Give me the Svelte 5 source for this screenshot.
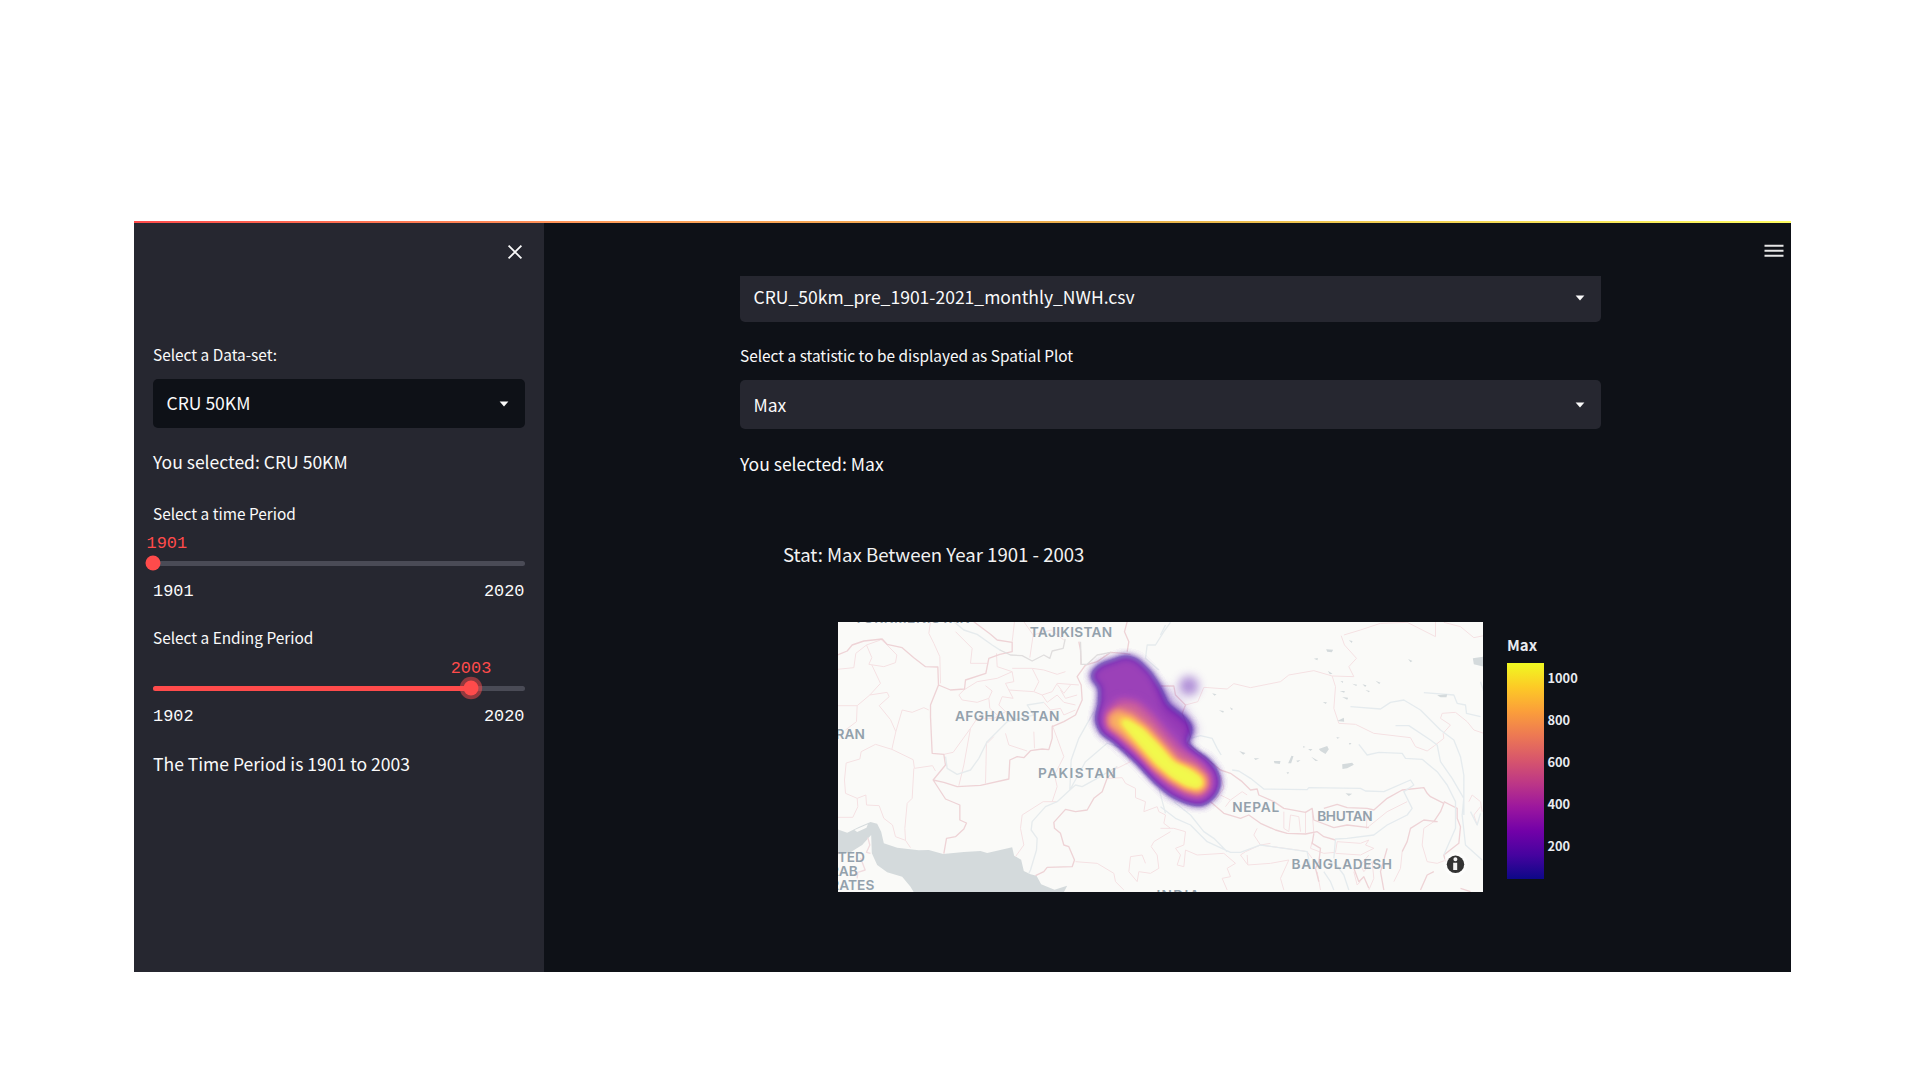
<script>
  const sliders = [
    { label: 'Select a time Period', min: 1901, max: 2020, value: 1901, pos: 0, focus: false },
    { label: 'Select a Ending Period', min: 1902, max: 2020, value: 2003, pos: 85.6, focus: true }
  ];
  const ticks = [1000, 800, 600, 400, 200];
</script>

{#snippet caret()}
  <svg class="caret" viewBox="0 0 10 6"><path d="M0.6 0.6H9.4L5 5.4Z" fill="#fafafa" /></svg>
{/snippet}

<main class="app">
  <div class="rainbow"></div>
  <div class="body">
    <aside>
      <div class="close">
        <svg viewBox="0 0 16 16"><path d="M1.6 1.6L14.4 14.4M14.4 1.6L1.6 14.4" stroke="#fafafa" stroke-width="1.8" /></svg>
      </div>
      <div class="label first">Select a Data-set:</div>
      <div class="select dark"><span>CRU 50KM</span>{@render caret()}</div>
      <p class="text picked">You selected: CRU 50KM</p>
      {#each sliders as s}
        <div class="slider">
          <div class="label">{s.label}</div>
          <div class="track">
            <div class="fill" style:width="{s.pos}%"></div>
            <div class="thumb" class:focus={s.focus} style:left="{s.pos}%"></div>
            <div class="value" class:edge={s.pos === 0} style:left="{s.pos}%">{s.value}</div>
          </div>
          <div class="range"><span>{s.min}</span><span>{s.max}</span></div>
        </div>
      {/each}
      <p class="text">The Time Period is 1901 to 2003</p>
    </aside>

    <section class="content">
      <svg class="menu" viewBox="0 0 20 14"><path d="M0.5 1.7H19.5M0.5 6.7H19.5M0.5 11.7H19.5" stroke="#e6e6e6" stroke-width="2.1" /></svg>
      <div class="column">
        <div class="select cut"><span>CRU_50km_pre_1901-2021_monthly_NWH.csv</span>{@render caret()}</div>
        <div class="label stat">Select a statistic to be displayed as Spatial Plot</div>
        <div class="select"><span>Max</span>{@render caret()}</div>
        <p class="text picked2">You selected: Max</p>
        <h2>Stat: Max Between Year 1901 - 2003</h2>
        <div class="plot">
          <svg class="map" viewBox="837.5 622 645 269.5" preserveAspectRatio="none">
            <defs>
              <filter id="soft" x="-50%" y="-50%" width="200%" height="200%" color-interpolation-filters="sRGB"><feGaussianBlur stdDeviation="12" /></filter>
              <filter id="mid" x="-50%" y="-50%" width="200%" height="200%" color-interpolation-filters="sRGB"><feGaussianBlur stdDeviation="15" /></filter>
              <filter id="fine" x="-50%" y="-50%" width="200%" height="200%" color-interpolation-filters="sRGB"><feGaussianBlur stdDeviation="9" /></filter>
              <!-- maps grey intensity to the plasma colour scale -->
              <filter id="plasma" x="0" y="0" width="100%" height="100%" color-interpolation-filters="sRGB">
                <feColorMatrix values="1 0 0 0 0  1 0 0 0 0  1 0 0 0 0  1 0 0 0 0" />
                <feComponentTransfer>
                  <feFuncR type="table" tableValues=".26 .24 .42 .55 .70 .82 .91 .97 .99 .95 .94" />
                  <feFuncG type="table" tableValues=".02 .02 .03 .09 .17 .30 .43 .57 .74 .92 .98" />
                  <feFuncB type="table" tableValues=".62 .62 .66 .66 .57 .45 .35 .26 .17 .14 .13" />
                  <feFuncA type="table" tableValues="0 .62 .80 .80 .80 .80 .80 .80 .80 .80 .80" />
                </feComponentTransfer>
              </filter>
            </defs>
            <rect x="837" y="621" width="647" height="272" fill="#fafaf8" />
            <!-- western half -->
            <g transform="translate(830 615) scale(.33333)" fill="none" stroke-linejoin="round">
              <path fill="#d4dadc" d="M20 643L50 653L85 636L120 621L140 626L152 650L160 685L200 698L265 706L295 705L338 717L400 711L450 708L470 714L545 697L551 722L572 734L580 768L600 778L618 782L632 808L672 824L710 812L700 832L250 832L240 815L215 785L170 772L140 750L124 715L122 660L95 690L60 712L20 718Z" />
              <path fill="#fafaf8" d="M72 645L112 628L108 638L80 651Z" />
              <path stroke="#f1dcdf" stroke-width="4" d="M112 668L118 690L108 712L120 715M90 728L104 765L82 772L80 790" />
              <g stroke="#f5e1e3" stroke-width="3">
                <path d="M20 163L70 158L76 115L108 90L150 75M108 90L124 128L115 148L160 155L195 143L199 120L170 90L150 72M124 150L150 205L118 240L80 272L20 272M80 272L78 320L45 345M118 240L170 232L176 245L146 272L180 314L196 350L184 403L248 434L252 460L306 452L315 468M196 350L215 285L245 292L280 278L295 285M184 403L135 388L92 410L88 432L47 444L42 495L45 535L80 550L82 575L67 607L20 607M80 550L106 540L108 570L146 572L160 610L186 630L195 665L225 676L223 640L230 565L245 550L250 460M225 676L240 698" />
                <path d="M300 20L295 55L310 85L328 125L330 205M375 50L425 100L420 145L470 145M545 80L552 20M580 20L608 60L662 45L700 75M608 60L598 128M498 115L500 155L545 170L550 200L525 205L535 225L610 230L625 200L605 160L640 165L680 178L705 170M545 160L605 160M545 170L500 190L440 200L400 225L385 240L395 255L440 262L475 250L485 228L465 212M535 225L548 250L515 245L505 270L525 290L490 310L440 310L420 340L400 450L385 512M475 250L478 280L500 300M610 230L635 240L665 230L680 205L745 210M635 240L650 262L680 240L700 262L735 270M340 418L368 412L420 340M468 380L465 505M490 365L470 385M525 355L535 390L590 408M610 350L612 400M665 330L680 370L700 425L672 480L680 515L665 560M640 262L660 285L690 280L700 300L735 285M680 208L700 235L720 210M690 225L705 250L740 240" />
                <path d="M680 560L638 560L575 600L570 640L580 690L555 725M830 490L875 488L885 505L915 520L915 548L945 560L940 590L980 575L985 590L1005 600L1000 625L1020 640M1020 650L970 680L962 695L980 720L985 760L960 775L925 770L920 800L895 770L900 725L935 720L945 745M735 740L800 745L850 775L855 800L880 825M860 460L900 440L885 410" />
              </g>
              <g stroke="#eed3d6" stroke-width="4">
                <path d="M20 120L50 108L65 90L100 78L155 72L170 88L215 98L250 128L285 155L322 156L324 210L300 270L300 305L305 415L340 418L345 450L308 495L340 502L380 515L450 511L535 492L538 435L560 425L580 428L600 407L635 402L655 404L665 370L665 335L700 320L735 300L755 255L752 210L740 185L765 150L800 140L840 112L880 115L900 118M308 495L345 552L388 570L388 615L408 624L400 642L375 665L348 670L340 716M324 210L360 225L402 222L405 195L466 175L475 130L508 118L545 110L545 82L500 75L480 58L440 28L430 20M860 455L830 490L815 530L790 550L770 585L735 590L705 583L670 622L672 640L690 655L700 690L715 695L732 735L725 755L650 757L640 770L615 782M752 150L750 105L745 80M890 20L882 50L895 80L890 110" />
              </g>
              <path stroke="#e0dede" stroke-width="4" d="M508 105L540 120L575 122L605 138L640 120L658 130L665 108L698 100L704 72M752 148L770 148L800 120L840 112M752 148L750 80" />
              <g stroke="#e6ebed" stroke-width="4">
                <path d="M370 20L400 45L440 58L485 90L510 106M345 425L350 460L380 478L420 465L445 430L470 380L500 350L530 320L610 300L590 270L640 262M790 290L745 370L722 435L718 525L680 560L645 575L605 620L602 645L620 670L618 705L600 765M718 525L735 510L755 515L800 490L860 455M718 525L765 440L830 385L880 400M1020 22L1000 50L975 90L950 90L945 130L985 165M600 765L595 775M985 520L1005 595" />
              </g>
            </g>
            <!-- eastern half -->
            <g transform="translate(1160 615) scale(.33333)" fill="none" stroke-linejoin="round">
              <g stroke="#f5e1e3" stroke-width="3">
                <path d="M550 60L600 45L660 25L740 22L825 65L825 20M850 22L900 35L940 68L970 62M542 62L552 90L588 130L565 155L580 185L515 183L460 167L385 180L360 200L270 218L220 206L200 222L130 217L112 260L75 270M515 183L525 215L520 280L535 325L585 328L640 355L750 368L765 395L800 408L822 392L850 370L848 355L870 330L840 310L845 295L885 292L920 320L940 345L970 355" />
                <path d="M180 540L210 555L195 575M210 555L245 530L260 540M160 560L190 520L180 480M370 590L370 640L385 650L390 600L415 605L420 650M435 590L435 655M455 590L460 655M620 590L618 640L680 590L740 560M290 640L280 660L300 690L330 685M260 720L262 750L330 745L385 735L360 790L370 825M262 750L240 720L255 710L300 690L410 705L440 710L455 730M455 680L450 700L490 715L525 712L530 680L600 685L625 675L615 690L640 700L600 720L525 715M625 720L600 750L610 770L635 740L640 790L625 825M0 640L40 640L75 650L70 690L45 700L60 720L50 750L70 755L75 705L110 720L190 715L225 745L200 760L210 785L185 790L200 825M820 620L790 640L785 690L800 740L830 745L870 730M925 560L935 540L960 560L965 590M960 575L940 600L950 630M470 770L480 825M580 770L590 810L600 800M700 800L720 760L725 710" />
              </g>
              <g stroke="#eed3d6" stroke-width="4">
                <path d="M0 213L40 213L45 240L75 270L65 295L75 320L90 365L80 385L180 465L210 475L245 500L270 525L290 522L295 540L340 560L370 580L435 592L455 580L460 615L520 638L560 630L625 638M150 560L190 595L240 610L265 600L300 625L345 645L380 655L435 657L470 650L490 665L525 675M490 580L530 568L560 578L620 580L640 585L680 550L725 525L790 518L800 535L810 545L850 565L840 590L820 620L830 620L790 615L750 640L740 680L725 710M850 560L870 570L890 580L890 610L900 635L895 685L850 720L855 740M680 700L660 770L670 825M460 655L455 685L480 700L475 740L465 760L475 800M900 820L930 830M580 760L595 800L610 785L625 820M780 825L800 780L820 770" />
              </g>
              <g stroke="#e5ebee" stroke-width="4">
                <path d="M0 60L15 30M90 370L120 362L155 370L170 400L182 420M215 465L235 468L270 490L310 522L440 524L445 518L600 520L615 528L670 530L750 495L760 510L730 530L755 580L740 600L680 630L640 660L560 670L525 672L520 730M595 388L620 420L655 412L725 415L735 430L785 433L830 470L860 510L885 560L885 640L850 720M705 332L745 332L810 375L830 390L840 440L875 490L910 550L905 600L915 690L965 735M790 233L880 240L890 265L915 270L918 295L960 305M570 275L660 282L690 262L730 255L780 285L840 345L880 375L900 425L910 480L910 600M930 590L950 630L960 595M0 575L45 610L90 630L140 680L210 712L240 712L300 690L440 710L450 760M40 560L90 600L130 650L160 670L200 710M490 770L510 800L520 825M520 740L550 780L565 825M960 200L970 230" />
              </g>
              <path fill="#d4dadc" d="M937 130L970 125V155L940 148ZM475 402L500 393L505 403L495 417L480 408ZM545 448L575 443L580 449L560 460L546 462ZM340 438L360 438L358 447L342 445ZM383 445L393 422L399 424L392 445ZM830 241L860 238L858 247L840 247ZM497 103L518 104L514 112L500 110ZM236 408L255 414L248 419ZM452 425L473 437L465 438ZM530 318L550 308L551 320ZM460 131L472 129L471 136ZM565 76L576 78L574 84ZM743 132L756 138L750 142ZM645 197L660 203L656 207ZM502 167L516 176L508 178ZM540 198L548 199L547 204ZM538 228L553 228L551 233ZM545 246L563 248L560 254ZM575 206L590 209L587 213ZM606 208L618 211L614 216ZM615 225L628 228L625 232ZM487 261L499 262L496 267ZM175 286L190 288L188 293ZM208 277L218 282L213 285ZM155 235L168 238L162 242ZM280 430L297 430L285 435ZM428 393L435 396L428 398ZM443 402L456 402L450 408ZM528 366L538 368L530 371ZM565 384L573 384L568 390ZM407 437L420 435L412 442ZM378 472L386 472L382 478ZM555 535L575 536L565 543Z" />
            </g>
            <g class="places">
              <text x="853.5" y="622.9" textLength="116">TURKMENISTAN</text>
              <text x="1029.2" y="637.2" textLength="82.5">TAJIKISTAN</text>
              <text x="954.4" y="721" textLength="104.5">AFGHANISTAN</text>
              <text x="864.3" y="739" text-anchor="end">IRAN</text>
              <text x="1037.5" y="777.8" textLength="78">PAKISTAN</text>
              <text x="1231.7" y="812.2" textLength="47">NEPAL</text>
              <text x="1316.7" y="821.2" textLength="55.5">BHUTAN</text>
              <text x="1291" y="869.2" textLength="100.5">BANGLADESH</text>
              <text x="864.5" y="862" text-anchor="end">UNITED</text>
              <text x="857.3" y="876" text-anchor="end">ARAB</text>
              <text x="873.8" y="890" text-anchor="end">EMIRATES</text>
              <text x="1156" y="899.8" textLength="43">INDIA</text>
            </g>
            <!-- density overlay -->
            <g transform="translate(1070 640) scale(.33333)">
              <circle cx="355" cy="138" r="30" fill="#8450c4" opacity=".62" filter="url(#mid)" />
              <path d="M250 120L300 150L345 205L385 270L360 300L280 220Z" fill="#8450c4" opacity=".35" filter="url(#mid)" />
              <g filter="url(#plasma)">
                <rect x="-20" y="-40" width="540" height="600" fill="#000" />
                <path filter="url(#soft)" fill="#464646" d="M62 103L90 75L135 60L165 49L200 60L240 100L268 145L290 195L335 228L360 255L362 278L345 308L375 340L410 360L438 395L447 430L432 467L395 494L355 488L304 466L263 430L203 365L133 302L94 278L76 240L88 190L90 140L68 120Z" />
                <path filter="url(#mid)" fill="#787878" d="M105 215L150 178L200 185L245 225L290 280L330 325L385 360L420 400L425 440L395 475L350 468L300 440L260 410L200 345L140 290L105 262Z" />
                <path filter="url(#fine)" fill="#b8b8b8" d="M112 228L140 208L185 222L235 262L285 318L325 362L375 382L408 410L410 440L385 461L345 450L298 422L250 385L190 320L145 280L115 258Z" />
                <path filter="url(#fine)" fill="#fff" d="M145 240L170 238L215 265L265 315L308 365L355 386L390 410L399 432L384 447L345 437L302 411L255 370L207 315L165 266Z" />
              </g>
            </g>
            <circle cx="1455" cy="864.3" r="12" fill="#fff" opacity=".6" />
            <circle cx="1455" cy="864.3" r="8.7" fill="#333" />
            <path d="M1452.7 862.8H1456.7V870H1452.7ZM1452.9 859.3a2 2 0 1 0 4 0a2 2 0 1 0 -4 0" fill="#f4f4f4" />
          </svg>
          <div class="legend">
            <div class="legend-title">Max</div>
            <div class="scale">
              <div class="bar"></div>
              <div class="ticks">{#each ticks as t}<span>{t}</span>{/each}</div>
            </div>
          </div>
        </div>
      </div>
    </section>
  </div>
</main>

<style>
  :global(body) { margin: 0; background: #fff; }
  :global(#app) { padding: 220.5px 0 0 134px; }
  .app { width: 1656.5px; height: 751.5px; display: flex; flex-direction: column; font-family: 'Noto Sans CJK SC', sans-serif; color: #fafafa; font-size: 17.55px; background: #0e1117; }
  .rainbow { height: 2px; flex: none; background: linear-gradient(90deg, #ff4b4b, #ffa05a 30%, #e8b04a 60%, #fffd60); }
  .body { flex: 1; display: flex; min-height: 0; }
  aside { width: 410px; flex: none; box-sizing: border-box; padding: 0 19.5px 0 19px; background: #262730; }
  .close { display: flex; justify-content: flex-end; padding: 21.5px 2px 0 0; height: 99.5px; }
  .close svg { width: 16px; height: 16px; }
  .label { font-size: 15.4px; line-height: 22px; white-space: nowrap; }
  .first { margin-bottom: 14px; margin-top: -1px; }
  .select { height: 49px; box-sizing: border-box; border-radius: 5px; background: #262730; display: flex; align-items: center; justify-content: space-between; padding: 0 16px 0 13.5px; line-height: 26px; }
  .select span { margin-top: 0; white-space: nowrap; }
  .dark { background: #0e1117; }
  .caret { width: 10px; height: 6px; margin-top: 1px; }
  .text { margin: 0; line-height: 26px; white-space: nowrap; }
  .picked { margin: 21px 0 27px; }
  .slider { height: 124.8px; }
  .track { position: relative; height: 5px; margin-top: 37.3px; border-radius: 3px; background: #4a4b56; }
  .fill { height: 5px; border-radius: 3px; background: #ff4b4b; }
  .thumb { position: absolute; top: 2.5px; width: 15px; height: 15px; border-radius: 50%; background: #ff4b4b; transform: translate(-50%, -50%); }
  .thumb.focus { box-shadow: 0 0 0 3.7px rgba(255, 75, 75, .5); }
  .value { position: absolute; top: -26.5px; transform: translateX(-50%); color: #ff4b4b; font: 16.9px/20px 'Liberation Mono', monospace; }
  .value.edge { transform: translateX(-6.5px); }
  .range { display: flex; justify-content: space-between; margin-top: 16.5px; font: 16.9px/20px 'Liberation Mono', monospace; }

  .content { flex: 1; position: relative; padding-left: 196px; }
  .menu { position: absolute; right: 6.5px; top: 21px; width: 20px; height: 14px; }
  .column { width: 860.5px; padding-top: 53.5px; }
  .cut { height: 45.5px; border-radius: 0 0 5px 5px; padding-bottom: 1px; }
  .cut span { margin-top: -3px; }
  .cut .caret, .cut :global(.caret) { margin-top: 0; }
  .stat { margin: 22px 0 14.5px; }
  .picked2 { margin-top: 22px; }
  h2 { margin: 63.5px 0 0 43px; font-size: 18.6px; line-height: 26px; font-weight: 400; color: #f2f2f2; }
  .plot { display: flex; margin: 55.5px 0 0 97.5px; }
  .map { width: 645px; height: 269.5px; flex: none; display: block; }
  .places { font: 600 13.7px Inter, sans-serif; fill: #93a1ac; }
  .legend { margin-left: 24.5px; padding-top: 11px; color: #e8ebf0; font-weight: 700; }
  .legend-title { font-size: 15px; line-height: 24px; }
  .scale { display: flex; height: 216.5px; margin-top: 5.5px; }
  .bar { width: 37px; background: linear-gradient(0deg, #0d0887, #46039f 11.1%, #7201a8 22.2%, #9c179e 33.3%, #bd3786 44.4%, #d8576b 55.5%, #ed7953 66.6%, #fb9f3a 77.7%, #fdca26 88.8%, #f0f921); }
  .ticks { display: flex; flex-direction: column; justify-content: space-between; padding: 4.5px 0 22.5px 3.5px; font-size: 12.8px; }
  .ticks span { line-height: 22px; }
</style>
